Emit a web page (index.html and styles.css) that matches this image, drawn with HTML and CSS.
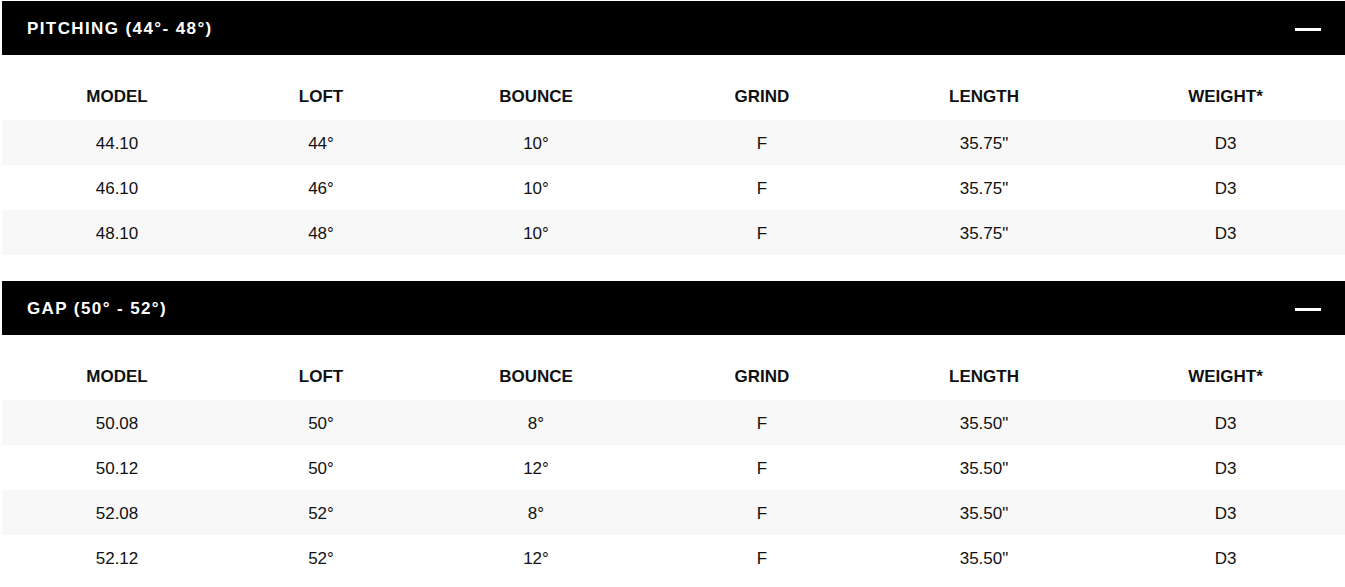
FILE: index.html
```html
<!DOCTYPE html>
<html>
<head>
<meta charset="utf-8">
<link rel="stylesheet" href="styles.css">
</head>
<body>
<div class="page">
  <section class="spec">
    <div class="bar">
      <h2 class="bar-title">PITCHING (44°- 48°)</h2>
      <span class="minus"></span>
    </div>
    <div class="row head"><div>MODEL</div><div>LOFT</div><div>BOUNCE</div><div>GRIND</div><div>LENGTH</div><div>WEIGHT*</div></div>
    <div class="row alt"><div>44.10</div><div>44°</div><div>10°</div><div>F</div><div>35.75"</div><div>D3</div></div>
    <div class="row"><div>46.10</div><div>46°</div><div>10°</div><div>F</div><div>35.75"</div><div>D3</div></div>
    <div class="row alt"><div>48.10</div><div>48°</div><div>10°</div><div>F</div><div>35.75"</div><div>D3</div></div>
  </section>
  <section class="spec">
    <div class="bar">
      <h2 class="bar-title">GAP (50° - 52°)</h2>
      <span class="minus"></span>
    </div>
    <div class="row head"><div>MODEL</div><div>LOFT</div><div>BOUNCE</div><div>GRIND</div><div>LENGTH</div><div>WEIGHT*</div></div>
    <div class="row alt"><div>50.08</div><div>50°</div><div>8°</div><div>F</div><div>35.50"</div><div>D3</div></div>
    <div class="row"><div>50.12</div><div>50°</div><div>12°</div><div>F</div><div>35.50"</div><div>D3</div></div>
    <div class="row alt"><div>52.08</div><div>52°</div><div>8°</div><div>F</div><div>35.50"</div><div>D3</div></div>
    <div class="row"><div>52.12</div><div>52°</div><div>12°</div><div>F</div><div>35.50"</div><div>D3</div></div>
  </section>
</div>
</body>
</html>
```

FILE: styles.css
```css
html, body {
  margin: 0;
  padding: 0;
  background: #fff;
}
body {
  font-family: "Liberation Sans", Arial, sans-serif;
  color: #111;
}
.page {
  padding: 1px 0 0 2px;
  display: flex;
  flex-direction: column;
  gap: 26px;
}
.bar {
  background: #000;
  height: 54px;
  display: flex;
  align-items: center;
  justify-content: space-between;
  padding: 0 24px 0 25px;
}
.bar-title {
  margin: 0;
  color: #fff;
  font-size: 17px;
  font-weight: 700;
  letter-spacing: 1.4px;
  padding-top: 1px;
}
.minus {
  width: 26px;
  height: 3px;
  background: #fff;
  margin-top: 3px;
}
.row {
  display: grid;
  grid-template-columns: 230px 178px 252px 200px 244px 239px;
  height: 45px;
  align-items: center;
  font-size: 17px;
  padding-top: 2px;
  box-sizing: border-box;
}
.row > div {
  text-align: center;
}
.row.alt {
  background: #f8f8f8;
}
.row.head {
  height: 65px;
  font-weight: 700;
  padding-top: 0;
  align-items: start;
}
.row.head > div {
  padding-top: 32px;
}
```
